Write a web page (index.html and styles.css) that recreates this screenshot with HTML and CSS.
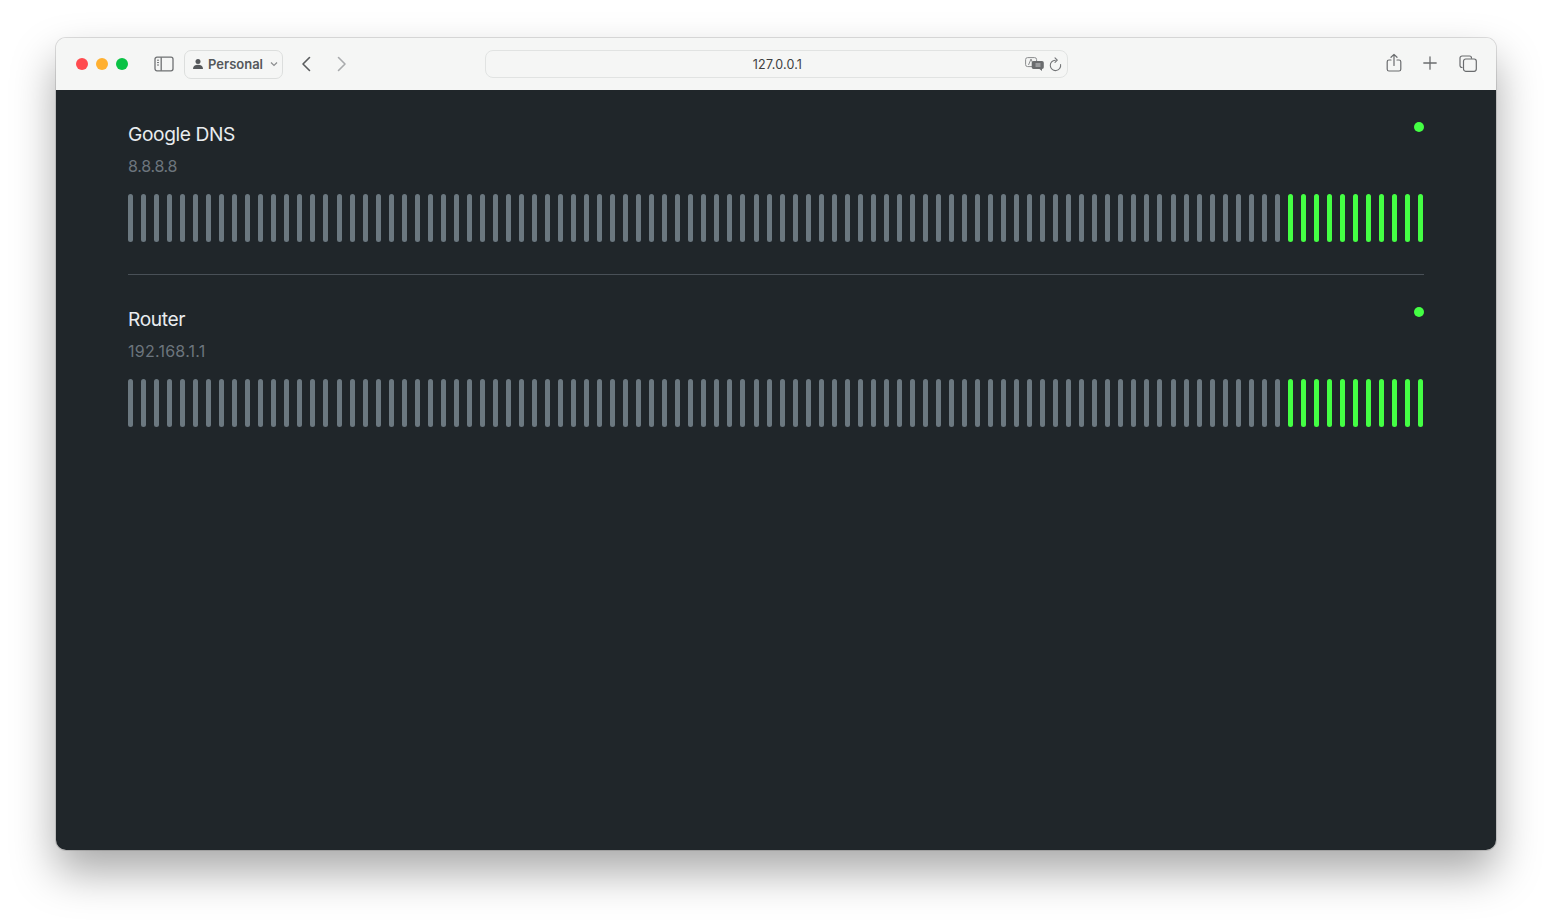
FILE: index.html
```html
<!DOCTYPE html>
<html lang="en">
<head>
<meta charset="utf-8">
<title>127.0.0.1</title>
<link rel="stylesheet" href="styles.css">
</head>
<body>
<div class="window">
  <header class="toolbar">
    <div class="lights"><span class="light red"></span><span class="light yellow"></span><span class="light green"></span></div>
    <svg class="ic sidebar" width="20" height="16" viewBox="0 0 20 16" fill="none" stroke="#6e7072" stroke-width="1.3"><rect x="1" y="1.2" width="18" height="13.6" rx="2"/><path d="M7.2 1.2v13.6"/><path d="M3 4.2h2M3 6.6h2M3 9h2" stroke-width="1"/></svg>
    <div class="profile">
      <svg width="12" height="12" viewBox="0 0 12 12" fill="#55585b"><circle cx="6" cy="3.4" r="2.5"/><path d="M1 11c0-3 2-4.3 5-4.3s5 1.3 5 4.3z"/></svg>
      <span class="profile-name">Personal</span>
      <svg width="8" height="6" viewBox="0 0 8 6" fill="none" stroke="#8b8d8f" stroke-width="1.2"><path d="M1 1.5l3 3 3-3"/></svg>
    </div>
    <svg class="ic back" width="12" height="16" viewBox="0 0 12 16" fill="none" stroke="#5a5c5e" stroke-width="1.6" stroke-linecap="round" stroke-linejoin="round"><path d="M9.5 1.5L3 8l6.500 6.500"/></svg>
    <svg class="ic forward" width="12" height="16" viewBox="0 0 12 16" fill="none" stroke="#a9abad" stroke-width="1.6" stroke-linecap="round" stroke-linejoin="round"><path d="M2.500 1.500L9 8l-6.500 6.500"/></svg>
    <div class="address">
      <span class="url">127.0.0.1</span>
      <svg class="translate" width="19" height="14" viewBox="0 0 19 14"><rect x="0.600" y="0.600" width="11" height="9" rx="2" fill="#f4f5f4" stroke="#8a8c8e"/><path d="M3.500 8l2.500-6 2.500 6" fill="none" stroke="#8a8c8e"/><path d="M8.500 4h8.500a1.800 1.800 0 0 1 1.800 1.800v4.400a1.800 1.800 0 0 1-1.800 1.800v2l-2.500-2h-6a1.800 1.800 0 0 1-1.800-1.800V5.800A1.800 1.800 0 0 1 8.500 4z" fill="#6a6c6e"/><path d="M10.500 7h5M10.500 9h5" stroke="#d8d9da" stroke-width="0.900"/></svg>
      <svg class="reload" width="13" height="15" viewBox="0 0 13 15" fill="none" stroke="#737577" stroke-width="1.100" stroke-linecap="round" stroke-linejoin="round"><path d="M11.600 7.500a5.200 5.200 0 1 1-5.300-4.300"/><path d="M6 .8L8.300 3.200 6 5.400"/></svg>
    </div>
    <svg class="ic share" width="16" height="20" viewBox="0 0 16 20" fill="none" stroke="#6a6c6e" stroke-width="1.200" stroke-linecap="round" stroke-linejoin="round"><path d="M5 7H3a1.800 1.800 0 0 0-1.800 1.800v7.400A1.800 1.800 0 0 0 3 18h10a1.800 1.800 0 0 0 1.800-1.800V8.800A1.800 1.800 0 0 0 13 7h-2"/><path d="M8 12.500V1.500M5 4.300l3-2.900 3 2.900"/></svg>
    <svg class="ic plus" width="14" height="14" viewBox="0 0 14 14" fill="none" stroke="#6a6c6e" stroke-width="1.300" stroke-linecap="round"><path d="M7 .8v12.400M.8 7h12.400"/></svg>
    <svg class="ic tabs" width="18" height="17" viewBox="0 0 18 17" fill="none" stroke="#6a6c6e" stroke-width="1.200"><path d="M3.500 12.500h-.3A2 2 0 0 1 1 10.500V3a2 2 0 0 1 2-2h7.500a2 2 0 0 1 2 2v.8"/><rect x="4.500" y="4" width="12.800" height="12.300" rx="2.200"/></svg>
  </header>
  <main class="content">
    <section class="host">
      <div class="host-head">
        <div>
          <h2 class="host-name">Google DNS</h2>
          <p class="host-ip">8.8.8.8</p>
        </div>
        <span class="status"></span>
      </div>
      <div class="bars">
        <i></i><i></i><i></i><i></i><i></i><i></i><i></i><i></i><i></i><i></i>
        <i></i><i></i><i></i><i></i><i></i><i></i><i></i><i></i><i></i><i></i>
        <i></i><i></i><i></i><i></i><i></i><i></i><i></i><i></i><i></i><i></i>
        <i></i><i></i><i></i><i></i><i></i><i></i><i></i><i></i><i></i><i></i>
        <i></i><i></i><i></i><i></i><i></i><i></i><i></i><i></i><i></i><i></i>
        <i></i><i></i><i></i><i></i><i></i><i></i><i></i><i></i><i></i><i></i>
        <i></i><i></i><i></i><i></i><i></i><i></i><i></i><i></i><i></i><i></i>
        <i></i><i></i><i></i><i></i><i></i><i></i><i></i><i></i><i></i><i></i>
        <i></i><i></i><i></i><i></i><i></i><i></i><i></i><i></i><i></i>
        <i class="up"></i><i class="up"></i><i class="up"></i><i class="up"></i><i class="up"></i><i class="up"></i><i class="up"></i><i class="up"></i><i class="up"></i><i class="up"></i><i class="up"></i>
      </div>
    </section>
    <section class="host">
      <div class="host-head">
        <div>
          <h2 class="host-name">Router</h2>
          <p class="host-ip host-ip-wide">192.168.1.1</p>
        </div>
        <span class="status"></span>
      </div>
      <div class="bars">
        <i></i><i></i><i></i><i></i><i></i><i></i><i></i><i></i><i></i><i></i>
        <i></i><i></i><i></i><i></i><i></i><i></i><i></i><i></i><i></i><i></i>
        <i></i><i></i><i></i><i></i><i></i><i></i><i></i><i></i><i></i><i></i>
        <i></i><i></i><i></i><i></i><i></i><i></i><i></i><i></i><i></i><i></i>
        <i></i><i></i><i></i><i></i><i></i><i></i><i></i><i></i><i></i><i></i>
        <i></i><i></i><i></i><i></i><i></i><i></i><i></i><i></i><i></i><i></i>
        <i></i><i></i><i></i><i></i><i></i><i></i><i></i><i></i><i></i><i></i>
        <i></i><i></i><i></i><i></i><i></i><i></i><i></i><i></i><i></i><i></i>
        <i></i><i></i><i></i><i></i><i></i><i></i><i></i><i></i><i></i>
        <i class="up"></i><i class="up"></i><i class="up"></i><i class="up"></i><i class="up"></i><i class="up"></i><i class="up"></i><i class="up"></i><i class="up"></i><i class="up"></i><i class="up"></i>
      </div>
    </section>
  </main>
</div>
</body>
</html>
```

FILE: styles.css
```css
* { box-sizing: border-box; }
html, body { margin: 0; height: 100%; }
body {
  background: #fff;
  padding: 38px 56px 74px;
  font-family: Inter, "Liberation Sans", sans-serif;
  overflow: hidden;
}
.window {
  height: 812px;
  display: flex;
  flex-direction: column;
  border-radius: 10px;
  overflow: hidden;
  box-shadow: 0 0 0 1px rgba(0,0,0,.12), 0 22px 44px rgba(0,0,0,.34);
}
.toolbar {
  height: 52px;
  flex: none;
  display: flex;
  align-items: center;
  background: #f5f6f5;
  padding: 0 17px 0 20px;
}
.lights { display: flex; gap: 8px; margin-right: 26px; }
.light { width: 12px; height: 12px; border-radius: 50%; }
.red { background: #ff4b4f; }
.yellow { background: #ffb030; }
.green { background: #0ac245; }
.ic { flex: none; display: block; }
.sidebar { margin-right: 10px; }
.profile {
  width: 99px;
  height: 29px;
  flex: none;
  display: flex;
  align-items: center;
  gap: 4px;
  padding: 0 4px 0 7px;
  border: 1px solid #dcdedd;
  border-radius: 7px;
  margin-right: 17px;
}
.profile-name { font-size: 13px; font-weight: 600; color: #55585b; flex: 1; white-space: nowrap; margin-bottom: 1px; }
.back { margin-right: 24px; }
.forward { margin-right: 137px; }
.address {
  width: 583px;
  height: 28px;
  flex: none;
  display: flex;
  align-items: center;
  border: 1px solid #e1e3e2;
  border-radius: 8px;
  padding: 0 5px 0 0;
  margin-right: 318px;
}
.url {
  flex: 1;
  text-align: center;
  font-size: 12.500px;
  color: #3d3f41;
  padding-left: 44px;
  letter-spacing: .2px;
}
.translate { margin-right: 5px; }
.share { margin-right: 21px; margin-bottom: 2px; }
.plus { margin-right: 22px; margin-bottom: 2px; }
.tabs { margin-bottom: 2px; }
.content {
  flex: 1;
  background: #20262a;
  padding: 0 72px;
}
.host { padding: 32px 0; }
.host + .host { border-top: 1px solid #495057; }
.host-head { display: flex; justify-content: space-between; align-items: flex-start; }
.host-name {
  margin: 0;
  font-size: 19.200px;
  font-weight: 400;
  line-height: 24px;
  letter-spacing: -.4px;
  color: #e9ecef;
}
.host-ip {
  margin: 8px 0 0;
  font-size: 16px;
  line-height: 24px;
  letter-spacing: -.3px;
  color: #6c757d;
}
.host-ip-wide { letter-spacing: .25px; }
.status { width: 10px; height: 10px; border-radius: 50%; background: #44ff44; }
.bars { display: flex; justify-content: space-between; height: 48px; margin-top: 16px; }
.bars i { display: block; width: 5px; height: 48px; border-radius: 3px; background: #6b7880; }
.bars i.up { background: #44ff44; }
```
